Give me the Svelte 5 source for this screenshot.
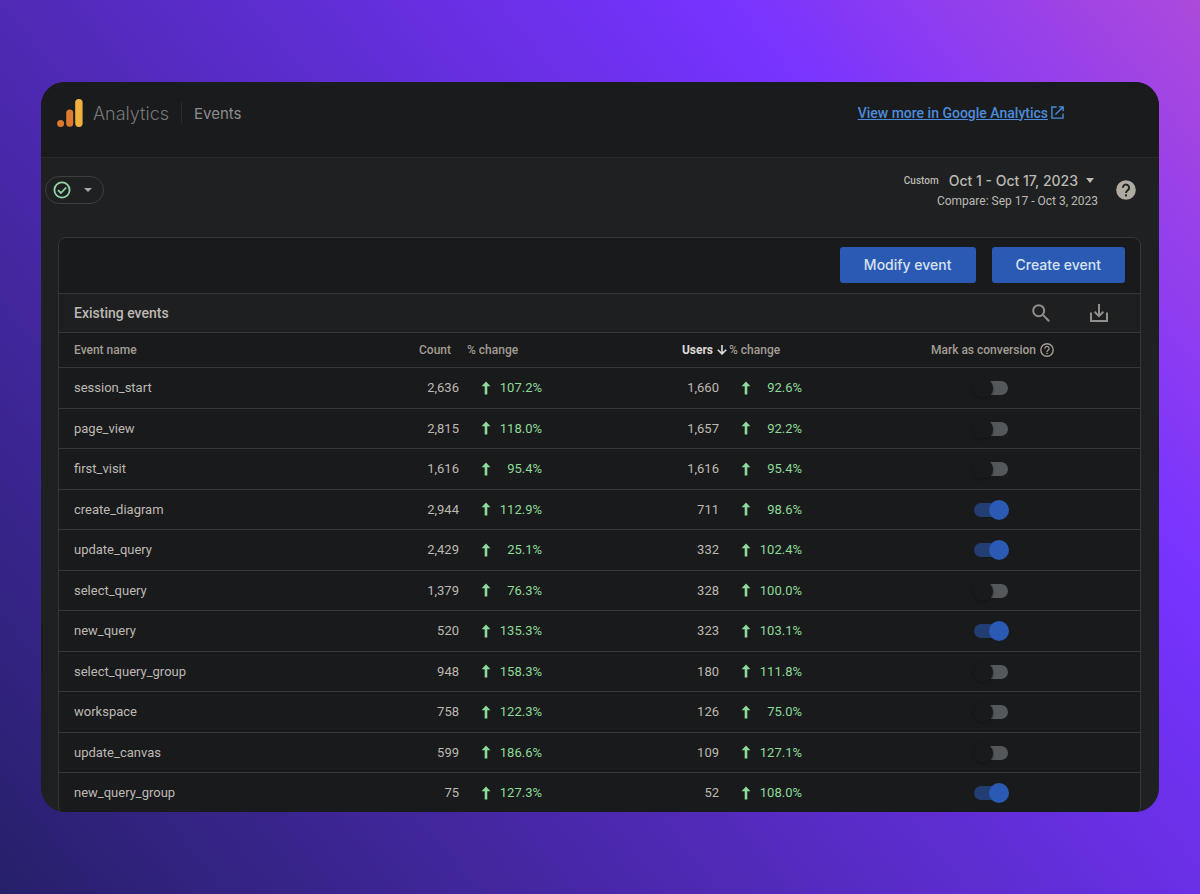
<script lang="ts">
	interface EventRow {
		name: string;
		count: string;
		countChange: string;
		users: string;
		usersChange: string;
		conversion: boolean;
	}

	let events: EventRow[] = $state([
		{ name: 'session_start', count: '2,636', countChange: '107.2%', users: '1,660', usersChange: '92.6%', conversion: false },
		{ name: 'page_view', count: '2,815', countChange: '118.0%', users: '1,657', usersChange: '92.2%', conversion: false },
		{ name: 'first_visit', count: '1,616', countChange: '95.4%', users: '1,616', usersChange: '95.4%', conversion: false },
		{ name: 'create_diagram', count: '2,944', countChange: '112.9%', users: '711', usersChange: '98.6%', conversion: true },
		{ name: 'update_query', count: '2,429', countChange: '25.1%', users: '332', usersChange: '102.4%', conversion: true },
		{ name: 'select_query', count: '1,379', countChange: '76.3%', users: '328', usersChange: '100.0%', conversion: false },
		{ name: 'new_query', count: '520', countChange: '135.3%', users: '323', usersChange: '103.1%', conversion: true },
		{ name: 'select_query_group', count: '948', countChange: '158.3%', users: '180', usersChange: '111.8%', conversion: false },
		{ name: 'workspace', count: '758', countChange: '122.3%', users: '126', usersChange: '75.0%', conversion: false },
		{ name: 'update_canvas', count: '599', countChange: '186.6%', users: '109', usersChange: '127.1%', conversion: false },
		{ name: 'new_query_group', count: '75', countChange: '127.3%', users: '52', usersChange: '108.0%', conversion: true }
	]);
</script>

{#snippet change(value: string)}
	<div class="change">
		<svg width="10" height="14" viewBox="0 0 10 14" aria-hidden="true">
			<path d="M5 0.6 9.4 5.2H6.3V13.6H3.7V5.2H0.6Z" fill="currentColor" />
		</svg>
		<span>{value}</span>
	</div>
{/snippet}

<div class="backdrop">
	<div class="window">
		<header class="topbar">
			<svg class="logo" width="26" height="28" viewBox="0 0 26 28" aria-hidden="true">
				<circle cx="3.6" cy="24.4" r="3.5" fill="#dc7b2f" />
				<rect x="9.2" y="10.6" width="7" height="17.2" rx="3.5" fill="#dc7b2f" />
				<rect x="18.2" y="0" width="7.4" height="27.9" rx="3.6" fill="#f0b040" />
			</svg>
			<span class="brand">Analytics</span>
			<h1>Events</h1>
			<a class="more" href="#analytics">
				<span>View more in Google Analytics</span>
				<svg width="13" height="13" viewBox="0 0 13 13" fill="none" stroke="currentColor" stroke-width="1.4" aria-hidden="true">
					<path d="M5.6 1H0.9V12.1H12V7.4M7.8 0.9H12.1V5.2M12 1 4.4 8.6" />
				</svg>
			</a>
		</header>

		<div class="toolbar">
			<button class="status" aria-label="Data quality">
				<svg width="18" height="18" viewBox="0 0 18 18" fill="none" stroke="#93d5a5" stroke-width="1.8" aria-hidden="true">
					<circle cx="9" cy="9" r="7.6" />
					<path d="M5 9.2 7.9 12 13.2 6.5" />
				</svg>
				<svg width="8" height="4" viewBox="0 0 8 4" aria-hidden="true"><path d="M0 0H8L4 4Z" fill="#aaa8a4" /></svg>
			</button>
			<div class="dates">
				<button class="range">
					<span class="custom">Custom</span>
					<span>Oct 1 - Oct 17, 2023</span>
					<svg width="8" height="5" viewBox="0 0 8 5" aria-hidden="true"><path d="M0 0H8L4 5Z" fill="currentColor" /></svg>
				</button>
				<p>Compare: Sep 17 - Oct 3, 2023</p>
			</div>
			<button class="help" aria-label="Help">
				<svg width="20" height="20" viewBox="0 0 20 20" aria-hidden="true">
					<circle cx="10" cy="10" r="9.8" fill="#b0aaa1" />
					<path d="M6.9 7.7A3.1 3.1 0 1 1 11.7 10.2C10.6 11 10 11.5 10 12.9" fill="none" stroke="#1f2123" stroke-width="1.9" />
					<rect x="9" y="14.4" width="2" height="2" fill="#1f2123" />
				</svg>
			</button>
		</div>

		<main class="card">
			<div class="actions">
				<button class="primary">Modify event</button>
				<button class="primary">Create event</button>
			</div>
			<div class="heading">
				<h2>Existing events</h2>
				<button aria-label="Search">
					<svg width="18" height="18" viewBox="0 0 18 18" fill="none" stroke="currentColor" stroke-width="2" aria-hidden="true">
						<circle cx="6.7" cy="6.7" r="5.5" />
						<path d="M10.6 10.6 17.2 17.2" />
					</svg>
				</button>
				<button aria-label="Download">
					<svg width="18" height="18" viewBox="0 0 18 18" fill="none" stroke="currentColor" stroke-width="2" aria-hidden="true">
						<path d="M1 8.5V16.9H17V8.5M9 0V12M4.6 7.8 9 12.2 13.4 7.8" />
					</svg>
				</button>
			</div>

			<table>
				<colgroup>
					<col />
					<col class="col-count" />
					<col class="col-change" />
					<col class="col-users" />
					<col class="col-change" />
					<col class="col-conversion" />
				</colgroup>
				<thead>
					<tr>
						<th>Event name</th>
						<th class="count">Count</th>
						<th>% change</th>
						<th class="users" aria-sort="descending">
							<span>Users
								<svg width="10" height="10" viewBox="0 0 10 10" fill="none" stroke="currentColor" stroke-width="1.6" aria-hidden="true">
									<path d="M5 0V9M0.8 4.7 5 8.9 9.2 4.7" />
								</svg>
							</span>
						</th>
						<th class="after-sort">% change</th>
						<th class="conversion">
							<span>Mark as conversion
								<svg width="14" height="14" viewBox="0 0 14 14" fill="none" stroke="currentColor" aria-hidden="true">
									<circle cx="7" cy="7" r="6.2" stroke-width="1.4" />
									<path d="M4.9 5.6A2.1 2.1 0 1 1 8.1 7.3C7.3 7.8 7 8.1 7 8.9" stroke-width="1.3" />
									<path d="M7 9.8V11.1" stroke-width="1.4" />
								</svg>
							</span>
						</th>
					</tr>
				</thead>
				<tbody>
					{#each events as event (event.name)}
						<tr>
							<td>{event.name}</td>
							<td class="number">{event.count}</td>
							<td>{@render change(event.countChange)}</td>
							<td class="number">{event.users}</td>
							<td>{@render change(event.usersChange)}</td>
							<td class="conversion">
								<input
									type="checkbox"
									role="switch"
									aria-label="Mark {event.name} as conversion"
									bind:checked={event.conversion}
								/>
							</td>
						</tr>
					{/each}
				</tbody>
			</table>
		</main>
	</div>
</div>

<style>
	:global(body) {
		margin: 0;
	}

	.backdrop {
		box-sizing: border-box;
		height: 100vh;
		padding: 82px 41px;
		background: linear-gradient(51deg, #26206a, #7733ff 75%, #ad4adb);
		font-family: Roboto, sans-serif;
		color: #bdb9b2;
	}

	.window {
		box-sizing: border-box;
		height: 100%;
		overflow: hidden;
		border-radius: 24px;
		background: #1e2021;
	}

	button {
		padding: 0;
		border: 0;
		background: none;
		color: inherit;
		font: inherit;
		cursor: pointer;
	}

	svg {
		display: block;
		flex: none;
	}

	.topbar {
		display: flex;
		align-items: center;
		box-sizing: border-box;
		height: 76px;
		padding: 0 95px 14px 16px;
		border-bottom: 1px solid #27292a;
		background: #1a1b1c;
	}

	.brand {
		margin-left: 10px;
		padding: 2px 12px 0 0;
		border-right: 1px solid #292b2d;
		font-family: Inter, sans-serif;
		font-size: 18px;
		font-weight: 300;
		line-height: 20px;
		color: #77787a;
	}

	h1 {
		margin: 0 0 0 12px;
		padding-top: 2px;
		font-family: Inter, sans-serif;
		font-size: 15px;
		font-weight: 400;
		color: #8d8d8d;
	}

	.more {
		display: flex;
		align-items: center;
		gap: 3px;
		margin-left: auto;
		font-size: 14px;
		font-weight: 500;
		color: #4c8bdb;
	}

	.toolbar {
		display: flex;
		align-items: center;
		height: 79px;
		padding: 0 23px 0 4px;
	}

	.status {
		display: flex;
		align-items: center;
		gap: 13px;
		box-sizing: border-box;
		width: 59px;
		height: 28px;
		margin-bottom: 16px;
		padding-left: 7px;
		border: 1px solid #3d3f40;
		border-radius: 14px;
	}

	.dates {
		display: flex;
		flex-direction: column;
		align-items: flex-end;
		gap: 2px;
		margin: 0 18px 14px auto;
	}

	.range {
		display: flex;
		align-items: center;
		gap: 8px;
		margin-right: 4px;
		font-family: Inter, sans-serif;
		font-size: 14px;
		font-weight: 500;
		line-height: 18px;
	}

	.custom {
		margin-right: 2px;
		font-family: Roboto, sans-serif;
		font-size: 10px;
	}

	.dates p {
		margin: 0;
		font-size: 12px;
		line-height: 18px;
	}

	.help {
		margin-bottom: 16px;
	}

	.card {
		margin: 0 18px 0 17px;
		border: 1px solid #353738;
		border-radius: 8px;
		background: #191a1b;
	}

	.actions {
		display: flex;
		align-items: center;
		justify-content: flex-end;
		gap: 16px;
		box-sizing: border-box;
		height: 55px;
		padding: 0 15px 2px;
	}

	.primary {
		height: 36px;
		padding: 0 24px;
		border-radius: 3px;
		background: #2a5ab4;
		font-family: Inter, sans-serif;
		font-size: 14px;
		font-weight: 500;
		color: #d8e2f3;
	}

	.heading {
		display: flex;
		align-items: center;
		gap: 40px;
		height: 38px;
		padding: 0 32px 0 15px;
		border: solid #353738;
		border-width: 1px 0;
		background: #1d1f20;
		color: #908f8d;
	}

	h2 {
		margin: 0 auto 0 0;
		font-size: 14px;
		font-weight: 500;
		color: #bdb9b2;
	}

	table {
		width: 100%;
		table-layout: fixed;
		border-collapse: collapse;
		font-size: 13px;
	}

	.col-count {
		width: 128px;
	}

	.col-change {
		width: 118px;
	}

	.col-users {
		width: 142px;
	}

	.col-conversion {
		width: 295px;
	}

	th,
	td {
		padding: 0;
		border-bottom: 1px solid #353738;
		text-align: left;
	}

	th {
		height: 34px;
		font-size: 12px;
		font-weight: 500;
		color: #a39d94;
	}

	td {
		box-sizing: border-box;
		height: 41px;
		padding-bottom: 1px;
	}

	tr:nth-child(even) td {
		height: 40px;
	}

	th:first-child,
	td:first-child {
		padding-left: 15px;
	}

	th.count {
		padding-right: 16px;
		text-align: right;
	}

	th span {
		display: inline-flex;
		align-items: center;
		gap: 4px;
		vertical-align: middle;
	}

	th.users {
		text-align: right;
		font-weight: 700;
		color: #dddbd7;
	}

	th.after-sort {
		padding-left: 2px;
	}

	.number {
		padding-right: 8px;
		text-align: right;
	}

	.change {
		display: flex;
		align-items: center;
		justify-content: space-between;
		width: 61px;
		margin-left: 14px;
		color: #8ddb98;
	}

	.conversion {
		text-align: center;
	}

	td.conversion {
		padding: 0 4px 0 0;
	}

	input {
		appearance: none;
		display: block;
		position: relative;
		width: 34px;
		height: 14px;
		margin: 0 auto;
		border-radius: 7px;
		background: #54585b;
	}

	input::before {
		content: '';
		position: absolute;
		top: -3px;
		left: -1px;
		width: 20px;
		height: 20px;
		border-radius: 50%;
		background: #191a1b;
		box-shadow: 0 1px 2px #141516;
	}

	input:checked {
		background: #223d72;
	}

	input:checked::before {
		left: 15px;
		background: #2a5ab4;
		box-shadow: none;
	}
</style>
